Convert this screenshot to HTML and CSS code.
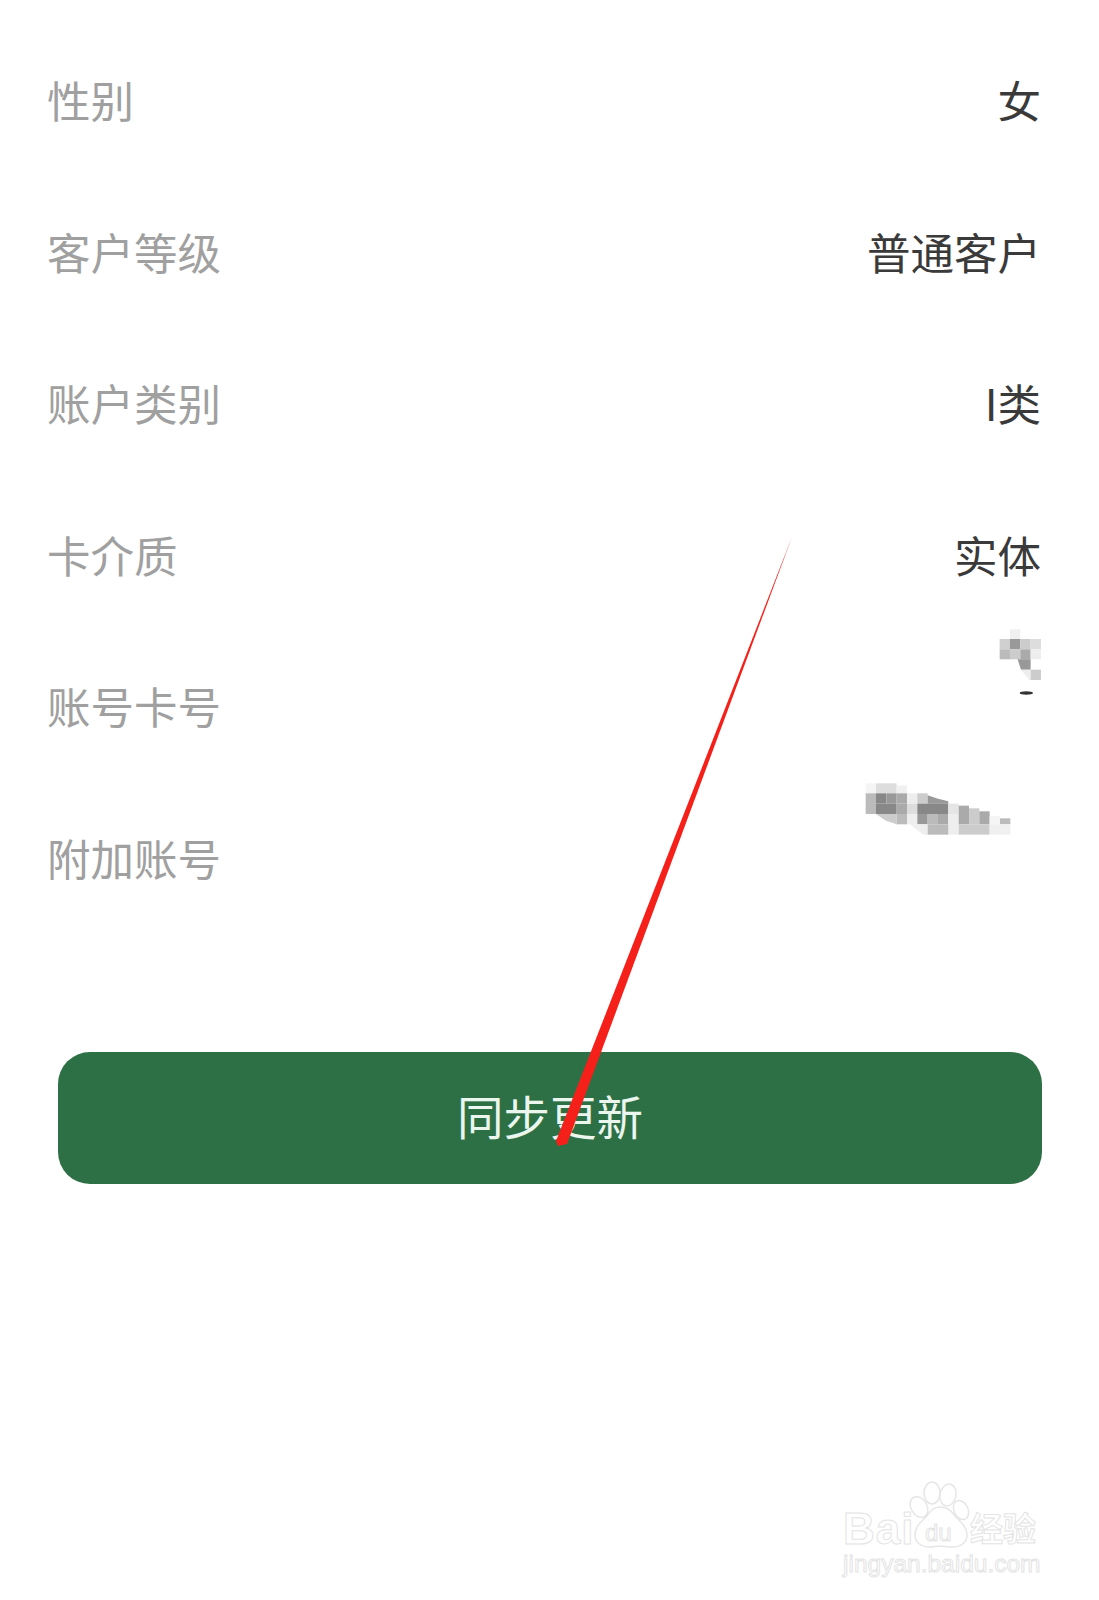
FILE: index.html
```html
<!DOCTYPE html>
<html lang="zh-CN">
<head>
    <meta charset="UTF-8">
    <meta name="viewport" content="width=device-width, initial-scale=1.0">
    <title>同步更新</title>
    <link rel="stylesheet" href="styles.css">
</head>
<body>
    <div class="page">
        <div class="info-list">
            <div class="info-row"><span class="info-label">性别</span><span class="info-value">女</span></div>
            <div class="info-row"><span class="info-label">客户等级</span><span class="info-value">普通客户</span></div>
            <div class="info-row"><span class="info-label">账户类别</span><span class="info-value">I类</span></div>
            <div class="info-row"><span class="info-label">卡介质</span><span class="info-value">实体</span></div>
            <div class="info-row"><span class="info-label">账号卡号</span></div>
            <div class="info-row"><span class="info-label">附加账号</span></div>
        </div>

        <button class="sync-btn" type="button">同步更新</button>

        <!-- mosaics and the red arrow line lie over the page -->
        <svg class="overlay" width="1099" height="1600" viewBox="0 0 1099 1600">
            <g transform="translate(800 600) scale(0.3333)">
                <rect x="630" y="88" width="31" height="29" fill="#f0f0f0"/>
                <rect x="599" y="117" width="31" height="31" fill="#d0d0d0"/>
                <rect x="630" y="117" width="31" height="31" fill="#999"/>
                <rect x="661" y="117" width="31" height="31" fill="#ccc"/>
                <rect x="692" y="117" width="31" height="31" fill="#ddd"/>
                <rect x="599" y="148" width="31" height="30" fill="#bbb"/>
                <rect x="630" y="148" width="31" height="30" fill="#ccc"/>
                <rect x="661" y="148" width="31" height="30" fill="#aaa"/>
                <rect x="692" y="148" width="31" height="30" fill="#eee"/>
                <polygon points="653,178 692,178 692,209 663,209" fill="#999"/>
                <polygon points="663,209 692,209 692,240 688,240" fill="#eee"/>
                <rect x="692" y="209" width="31" height="31" fill="#ccc"/>
                <ellipse cx="679" cy="279" rx="20" ry="5" fill="#333"/>

                <rect x="197" y="550" width="31" height="30" fill="#f5f5f5"/>
                <rect x="228" y="550" width="62" height="30" fill="#ddd"/>
                <rect x="290" y="556" width="31" height="24" fill="#f0f0f0"/>
                <rect x="197" y="580" width="31" height="62" fill="#bbb"/>
                <rect x="228" y="580" width="31" height="31" fill="#888"/>
                <rect x="259" y="580" width="31" height="31" fill="#999"/>
                <rect x="290" y="580" width="31" height="31" fill="#aaa"/>
                <rect x="321" y="580" width="31" height="31" fill="#eee"/>
                <rect x="352" y="580" width="31" height="31" fill="#ccc"/>
                <polygon points="383,586 414,596 445,604 445,611 383,611" fill="#999"/>
                <rect x="228" y="611" width="62" height="31" fill="#888"/>
                <rect x="290" y="611" width="31" height="31" fill="#aaa"/>
                <rect x="321" y="611" width="31" height="31" fill="#ddd"/>
                <rect x="352" y="611" width="93" height="31" fill="#888"/>
                <rect x="445" y="611" width="31" height="31" fill="#e5e5e5"/>
                <rect x="476" y="617" width="31" height="25" fill="#aaa"/>
                <rect x="507" y="625" width="31" height="17" fill="#ccc"/>
                <rect x="538" y="634" width="31" height="8" fill="#aaa"/>
                <polygon points="228,642 290,642 290,673 258,662" fill="#ccc"/>
                <rect x="290" y="642" width="31" height="31" fill="#bbb"/>
                <rect x="321" y="642" width="31" height="31" fill="#eee"/>
                <rect x="352" y="642" width="31" height="31" fill="#999"/>
                <rect x="383" y="642" width="31" height="31" fill="#bbb"/>
                <rect x="414" y="642" width="31" height="31" fill="#aaa"/>
                <rect x="445" y="642" width="31" height="62" fill="#eee"/>
                <rect x="476" y="642" width="31" height="31" fill="#aaa"/>
                <rect x="507" y="642" width="31" height="31" fill="#ccc"/>
                <rect x="538" y="642" width="31" height="31" fill="#aaa"/>
                <rect x="569" y="648" width="31" height="25" fill="#f5f5f5"/>
                <rect x="600" y="655" width="31" height="18" fill="#bbb"/>
                <polygon points="330,673 383,673 383,704 370,704" fill="#eee"/>
                <rect x="383" y="673" width="62" height="31" fill="#bbb"/>
                <rect x="476" y="673" width="93" height="31" fill="#ccc"/>
                <rect x="569" y="673" width="62" height="31" fill="#f0f0f0"/>
            </g>
            <polygon points="792,537 567,1144 558,1146 556,1141" fill="#f5201a"/>
            <!-- paw of the watermark -->
            <g fill="#fff" stroke="#e6e6e6" stroke-width="1.5">
                <ellipse cx="919" cy="1507" rx="8" ry="11" transform="rotate(-30 919 1507)"/>
                <ellipse cx="932" cy="1493" rx="8" ry="11"/>
                <ellipse cx="948" cy="1495" rx="8" ry="11" transform="rotate(12 948 1495)"/>
                <ellipse cx="961" cy="1510" rx="7" ry="10" transform="rotate(-25 961 1510)"/>
                <path d="M940 1507 c-7 0 -10 5 -14 10 c-5 5 -11 9 -11 18 c0 8 7 12 15 12 c4 0 6 -1 10 -1 c4 0 7 1 12 1 c8 0 15 -4 15 -12 c0 -8 -6 -13 -11 -18 c-4 -5 -8 -10 -16 -10 z"/>
            </g>
        </svg>

        <div class="watermark">
            <span class="wm-bai">Bai</span>
            <span class="wm-du">du</span>
            <span class="wm-cn">经验</span>
            <span class="wm-url">jingyan.baidu.com</span>
        </div>
    </div>
</body>
</html>
```

FILE: styles.css
```css
body {
    margin: 0;
    background-color: #fff;
    font-family: "Noto Sans CJK SC", "Noto Sans", sans-serif;
}

.page {
    position: relative;
    width: 1099px;
    height: 1600px;
    overflow: hidden;
}

.info-list {
    padding: 24px 58px 0 47px;
}

.info-row {
    display: flex;
    justify-content: space-between;
    align-items: center;
    height: 151.5px;
    font-size: 43.5px;
    line-height: 1;
}

.info-label {
    color: #a0a0a0;
}

.info-value {
    color: #3a3a3a;
}

.sync-btn {
    display: block;
    width: 984px;
    height: 132px;
    margin: 119px 0 0 58px;
    padding: 0 0 7px;
    border: none;
    border-radius: 32px;
    background-color: #2e7045;
    color: #eaf6ee;
    font-family: inherit;
    font-size: 46.5px;
}

.overlay {
    position: absolute;
    top: 0;
    left: 0;
}

.watermark span {
    position: absolute;
    color: #fff;
    -webkit-text-stroke: 1px #e4e4e4;
    line-height: 1;
    white-space: nowrap;
}

.wm-bai {
    left: 843px;
    top: 1507px;
    font-family: "Liberation Sans", sans-serif;
    font-size: 44px;
    font-weight: 700;
    letter-spacing: 1px;
}

.wm-du {
    left: 925px;
    top: 1521px;
    font-family: "Liberation Sans", sans-serif;
    font-size: 24px;
}

.wm-cn {
    left: 970px;
    top: 1511px;
    font-size: 33px;
    font-weight: 700;
}

.wm-url {
    left: 843px;
    top: 1552px;
    font-family: "Liberation Sans", sans-serif;
    font-size: 24.5px;
}
```
